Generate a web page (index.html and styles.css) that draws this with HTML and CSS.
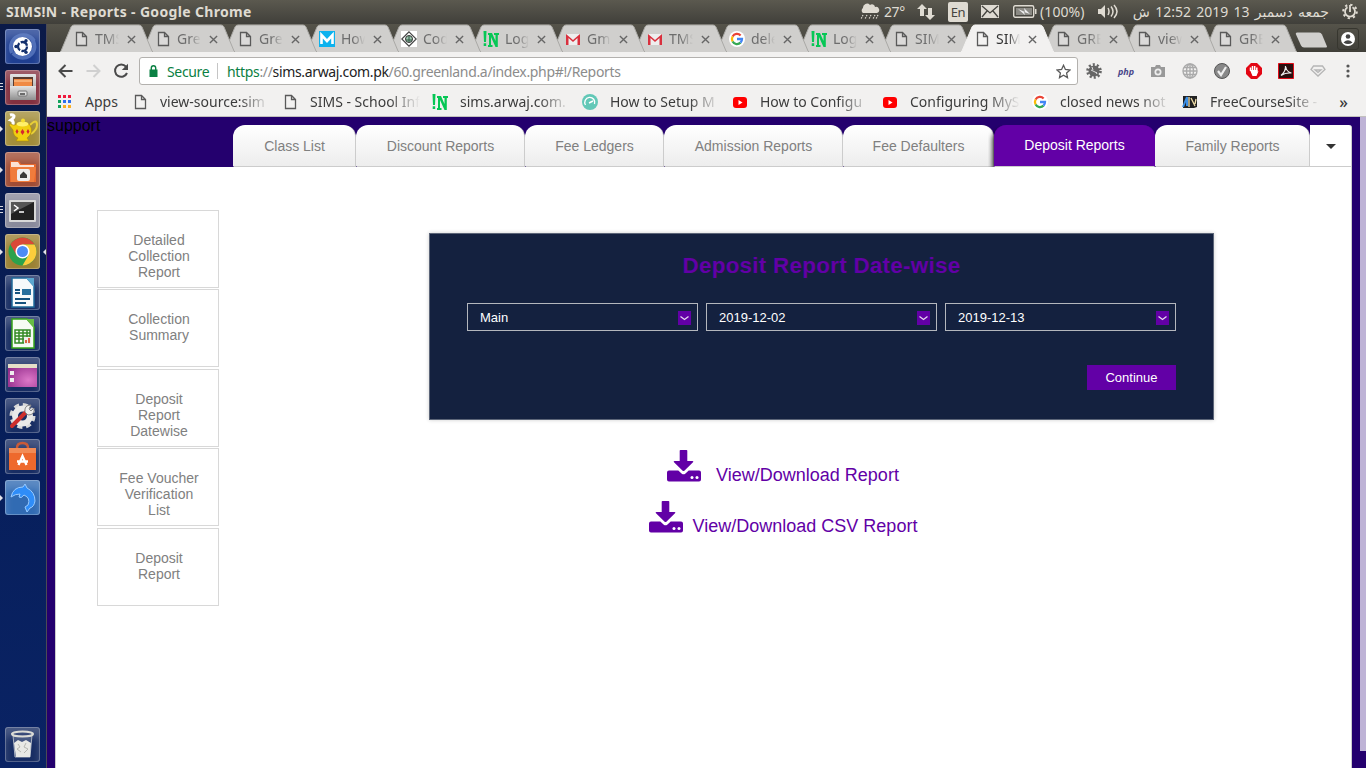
FILE: index.html
```
<!DOCTYPE html>
<html lang="en">
<head>
<meta charset="utf-8">
<title>SIMS!N - Reports</title>
<link rel="stylesheet" href="styles.css">
</head>
<body>
<svg class="defs" width="0" height="0">
  <defs>
    <linearGradient id="steel" x1="0" y1="0" x2="0" y2="1"><stop offset="0" stop-color="#e4e4e4"/><stop offset="1" stop-color="#8f8f8f"/></linearGradient>
    <radialGradient id="plum" cx=".7" cy=".7" r=".9"><stop offset="0" stop-color="#dc78c8"/><stop offset="1" stop-color="#8b2484"/></radialGradient>
    <symbol id="tab" viewBox="0 0 96 28"><path d="M0 28L1 27L11 3Q12 1 14 1H79Q81 1 82 3L92 27L93 28"/></symbol>
    <symbol id="page" viewBox="0 0 16 16"><path d="M3.500 1.500h6l4 4v9h-10zM9.500 1.500v4h4" fill="#f4f4f4" fill-opacity=".3" stroke="#5a5a5a" stroke-width="1.300"/></symbol>
    <symbol id="close" viewBox="0 0 10 10"><path d="M1 1l8 8M9 1L1 9" stroke="#666" stroke-width="1.500"/></symbol>
    <symbol id="sin" viewBox="0 0 16 16"><path d="M.5 0h3L3 11H1zM.7 12.300h2.500V15H.7zM5 2h4l3.500 8V4H11V2h5v2h-1.200v12h-2.300L8 6v8h1.500v2H5v-2h1V4H5z" fill="#06c755"/></symbol>
    <symbol id="gmail" viewBox="0 0 16 16"><path d="M1 3h14v11H1z" fill="#eee"/><path d="M1 14V3l7 6 7-6v11h-2.500V7L8 11 3.500 7v7z" fill="#d9303e"/></symbol>
    <symbol id="google" viewBox="0 0 16 16"><circle cx="8" cy="8" r="8" fill="#fff"/><g fill="none" stroke-width="2.300"><path d="M3.600 5.500A5 5 0 0 1 11.600 4.500" stroke="#ea4335"/><path d="M3.600 10.500A5 5 0 0 1 3.600 5.500" stroke="#fbbc05"/><path d="M11.500 11.600A5 5 0 0 1 3.600 10.500" stroke="#34a853"/><path d="M8 8h5A5 5 0 0 1 11.500 11.600" stroke="#4285f4"/></g></symbol>
    <symbol id="youtube" viewBox="0 0 16 16"><rect x="1" y="3" width="14" height="11" rx="3" fill="#f00"/><path d="M6.500 6l4 2.500-4 2.500z" fill="#fff"/></symbol>
    <symbol id="download" viewBox="0 0 34 32"><path d="M13.500 0h6q.8 0 .8.800V11h5.200q1.500.2.500 1.300l-8.400 8.300q-1.100 1-2.200 0L7 12.300Q6 11.200 7.500 11h5.200V.8q0-.8.800-.8z"/><path d="M2 20.500h9.300l3.500 3.200q1.700 1.200 3.400 0l3.500-3.200H32q2 0 2 2v7q0 2-2 2H2q-2 0-2-2v-7q0-2 2-2z"/><circle cx="25" cy="27.500" r="1.500" fill="#fff"/><circle cx="30" cy="27.500" r="1.500" fill="#fff"/></symbol>
    <symbol id="chev" viewBox="0 0 13 14"><path d="M2.500 5.500L6.500 8.500 10.500 5.500" fill="none" stroke="#e6d6f0" stroke-width="1.300"/></symbol>
  </defs>
</svg>

<header class="panelbar">
  <b class="wtitle">SIMS!N - Reports - Google Chrome</b>
  <div class="indicators">
    <svg class="weather" width="20" height="18" viewBox="0 0 20 18"><path d="M3 10a3 3 0 0 1 0-5A4 4 0 0 1 10 2a3 3 0 0 1 5 2 3 3 0 0 1 2 6z" fill="#dfdbd2"/><path d="M3 12l-2 4M7 12l-2 4M11 12l-2 4M15 12l-2 4M18 12l-2 4" stroke="#dfdbd2" stroke-width="1.200" stroke-dasharray="1.500 1"/></svg>
    <span class="temp">27°</span>
    <svg class="net" width="18" height="16" viewBox="0 0 18 16" fill="#dfdbd2"><path d="M5 0l5 5H7v7H3V5H0zM11 4h4v7h3l-5 5-5-5h3z"/></svg>
    <span class="lang">En</span>
    <svg class="mail" width="18" height="13" viewBox="0 0 18 13"><rect width="18" height="13" fill="#dfdbd2"/><path d="M1 1l8 7 8-7M1 12l5-6M17 12l-5-6" fill="none" stroke="#45443f" stroke-width="1.300"/></svg>
    <svg class="batt" width="24" height="13" viewBox="0 0 24 13"><rect x=".7" y=".7" width="20" height="11.600" rx="1.500" fill="none" stroke="#dfdbd2" stroke-width="1.400"/><path d="M3 3h16v7H3z" fill="#8b8a84"/><path d="M22 4h1.500v5H22z" fill="#dfdbd2"/><path d="M5 4l7 3-1-4 6 6-6-2 1 3z" fill="#eee"/></svg>
    <span class="pct">(100%)</span>
    <svg class="vol" width="21" height="15" viewBox="0 0 21 15" fill="none" stroke="#dfdbd2" stroke-width="1.500"><path d="M0 5h3l4-4v13l-4-4H0z" fill="#dfdbd2" stroke="none"/><path d="M10 4q2 3.500 0 7M13 2.500q4 5 0 10M16 1q6 6.500 0 13"/></svg>
    <span class="date" dir="rtl" lang="ur">جمعه دسمبر 13 2019 12:52 ش</span>
    <svg class="cog" width="16" height="17" viewBox="0 0 16 17" fill="none" stroke="#dfdbd2"><circle cx="8" cy="8.500" r="6.800" stroke-width="2" stroke-dasharray="2.300 3.040"/><path d="M5.500 4.300a5 5 0 1 0 5 0M8 2v7" stroke-width="1.800"/></svg>
  </div>
</header>

<div class="desktop">
  <nav class="launcher">
    <svg class="app c-dash" viewBox="0 0 35 35"><path d="M7 24C1 8 21 0 29 12M27 10c9 15-10 25-19 14" fill="none" stroke="#6f8dd0" stroke-width="4" opacity=".6"/><circle cx="17.500" cy="17.500" r="9.500" fill="#fff"/><circle cx="17.500" cy="17.500" r="4.500" fill="none" stroke="#14306d" stroke-width="2.300" stroke-dasharray="8 1.400"/><g fill="#14306d"><circle cx="11" cy="17.500" r="1.700"/><circle cx="21" cy="11.800" r="1.700"/><circle cx="21" cy="23.200" r="1.700"/></g></svg>
    <div class="slot run3"><svg class="app c-files" viewBox="0 0 35 35"><rect x="5" y="4" width="26" height="26" rx="1" fill="url(#steel)"/><path d="M8 7h20v9H8z" fill="#5b3b2e"/><path d="M9 9h18v7H9z" fill="#f08a45"/><path d="M9 11h18" stroke="#ffd0a0"/><rect x="5" y="16" width="26" height="14" fill="url(#steel)"/><rect x="13" y="21" width="9" height="5" rx="1" fill="#ddd" stroke="#777"/><path d="M15 24h5" stroke="#444" stroke-width="1.500"/></svg></div>
    <div class="slot run1"><svg class="app c-tea" viewBox="0 0 35 35"><path d="M5 4q3-1 4 1 0 2-3 4 3 1 2 5" fill="none" stroke="#fff" stroke-width="3"/><path d="M25 14q7-7 7 0 0 5-6 9" fill="none" stroke="#e8cf37" stroke-width="2"/><path d="M10 14Q17 8 25 14q4 8-3 13l2 3H11l2-3q-5-2-5-8L4 14q1-2 4 0z" fill="#f1cf10" stroke="#ad8a08" stroke-width=".6"/><ellipse cx="17.500" cy="13" rx="6" ry="2.500" fill="#fff06a"/><circle cx="18" cy="9.500" r="2" fill="#f6dc2c"/><path d="M12 18l1.500 2.500L12 23l-1.500-2.500zM17.500 18l2 3-2 3-2-3zM23 18l1.500 2.500L23 23l-1.500-2.500z" fill="#d7262f"/></svg></div>
    <div class="slot run1"><svg class="app c-home" viewBox="0 0 35 35"><path d="M5 9h9l2 3h15v18H5z" fill="#e8682d"/><path d="M6 10h7l2 3h14v2H6z" fill="#fff" opacity=".8"/><path d="M5 15h26l-2 15H6z" fill="#f07c3c"/><rect x="12" y="17" width="13" height="12" rx="2" fill="#eee"/><path d="M15 23l3.500-3.500L22 23v3h-7z" fill="#3a3a3a"/></svg></div>
    <div class="slot run3"><svg class="app c-term" viewBox="0 0 35 35"><rect x="4" y="7" width="27" height="22" rx="1" fill="#d8d8d8"/><rect x="6" y="9" width="23" height="18" fill="#222"/><path d="M6 9h23L6 21z" fill="#555"/><path d="M9 12l4 3-4 3M14 19h5" fill="none" stroke="#fff" stroke-width="1.500"/></svg></div>
    <div class="slot run1 focused"><svg class="app c-chrome" viewBox="0 0 35 35"><circle cx="17.500" cy="17.500" r="14" fill="#2ba24c"/><path d="M5.400 10.500A14 14 0 0 1 29.600 10.500H17.500L11.500 21z" fill="#da4937"/><path d="M29.600 10.500A14 14 0 0 1 17.500 31.500L23.600 21 17.500 10.500z" fill="#fccd3c"/><circle cx="17.500" cy="17.500" r="7" fill="#fff"/><circle cx="17.500" cy="17.500" r="5.500" fill="#4c8bf5"/></svg></div>
    <svg class="app c-dark" viewBox="0 0 35 35"><path d="M7 3h15l7 8v21H7z" fill="#f6f9fb" stroke="#1e6a9b" stroke-width="1.500"/><path d="M21 3h8v9z" fill="#5ba7cf"/><path d="M10 15h5M10 18h5M10 24h15M10 28h11" stroke="#14527e" stroke-width="1.800"/><rect x="17" y="14" width="9" height="6" fill="#276f9d"/></svg>
    <svg class="app c-dark" viewBox="0 0 35 35"><path d="M7 3h15l7 8v21H7z" fill="#f6fbf4" stroke="#36a519" stroke-width="1.500"/><path d="M21 3h8v9z" fill="#67bd45"/><path d="M10 14h15v13H10zM10 17h15M10 20h15M10 23h15M14 14v13M18 14v13M22 14v13" fill="none" stroke="#338b25" stroke-width="1.500"/><path d="M19 21h7v7h-7z" fill="#eee"/><path d="M21 27v-3M24 27v-5" stroke="#dc6543" stroke-width="2"/></svg>
    <svg class="app c-dark" viewBox="0 0 35 35"><rect x="3" y="7" width="29" height="23" fill="url(#plum)"/><path d="M3 7h29v4H3z" fill="#e5dfc8"/><path d="M5 14h4v4H5zM5 21h4v4H5z" fill="#eee"/></svg>
    <svg class="app c-dark" viewBox="0 0 35 35"><circle cx="17.500" cy="18" r="11" fill="none" stroke="#d8d8d8" stroke-width="4" stroke-dasharray="5 3.640"/><circle cx="17.500" cy="18" r="7.500" fill="none" stroke="#e9e9e9" stroke-width="6"/><path d="M7 28L21 14" stroke="#cd2e2b" stroke-width="4" stroke-linecap="round"/><path d="M20 14q-1-7 6-7l-2 4 2 2 3-3q1 7-6 7z" fill="#eee" stroke="#888"/></svg>
    <svg class="app c-dark" viewBox="0 0 35 35"><path d="M12 9q0-5 5.500-5T23 9" fill="none" stroke="#c85a38" stroke-width="2.500"/><path d="M4 9h27v22H4z" fill="#ee692d"/><path d="M4 9h27v5H4z" fill="#f28b55"/><path d="M13.500 26l4-9 4 9M12 22.500h11" fill="none" stroke="#fff" stroke-width="2.300"/></svg>
    <div class="slot run1"><svg class="app c-dolphin" viewBox="0 0 35 35"><path d="M6 17q2-10 12-10l2-3 2 4q8 4 8 13-1 6-5 7l-3 4-2-5 3-2q3-7-4-10-3 4-5 2l1-3q-5 0-9 3z" fill="#2f8df8" stroke="#9acbff" stroke-width="1"/></svg></div>
    <svg class="app c-dark trash" viewBox="0 0 35 35"><path d="M8 8l2 22h15l2-22" fill="#b9c0cc" fill-opacity=".25" stroke="#aab2c0"/><path d="M9 16l4-3 4 2 4-2 5 3-1 14H11z" fill="#e9e9e5"/><path d="M13 17l2 3-3 2 4 3M21 16l-2 4 4 2-4 4" fill="none" stroke="#b7b7b1"/><ellipse cx="17.500" cy="7" rx="10.500" ry="2.500" fill="none" stroke="#dcdcd6" stroke-width="2.200"/></svg>
  </nav>

  <div class="browser">
    <div class="tabstrip">
      <div class="tab"><svg class="shape"><use href="#tab"/></svg><svg class="fav"><use href="#page"/></svg><span>TMS</span><svg class="x"><use href="#close"/></svg></div>
      <div class="tab"><svg class="shape"><use href="#tab"/></svg><svg class="fav"><use href="#page"/></svg><span>Gre</span><svg class="x"><use href="#close"/></svg></div>
      <div class="tab"><svg class="shape"><use href="#tab"/></svg><svg class="fav"><use href="#page"/></svg><span>Gre</span><svg class="x"><use href="#close"/></svg></div>
      <div class="tab"><svg class="shape"><use href="#tab"/></svg><svg class="fav" viewBox="0 0 16 16"><path d="M0 0h16v16H0z" fill="#0db2ee"/><path d="M2.500 13V4l5.500 6 5.500-6v9" fill="none" stroke="#fff" stroke-width="2.600"/></svg><span>How</span><svg class="x"><use href="#close"/></svg></div>
      <div class="tab"><svg class="shape"><use href="#tab"/></svg><svg class="fav" viewBox="0 0 16 16"><path d="M0 0h16v16H0z" fill="#fff"/><path d="M8 .8L15.200 8 8 15.200.8 8z" fill="none" stroke="#444" stroke-width="1.200"/><circle cx="8" cy="8" r="3.500" fill="#9ac5ac" stroke="#333"/><path d="M5 9h6M8 5v6" stroke="#354"/></svg><span>Cod</span><svg class="x"><use href="#close"/></svg></div>
      <div class="tab"><svg class="shape"><use href="#tab"/></svg><svg class="fav"><use href="#sin"/></svg><span>Log</span><svg class="x"><use href="#close"/></svg></div>
      <div class="tab"><svg class="shape"><use href="#tab"/></svg><svg class="fav"><use href="#gmail"/></svg><span>Gm</span><svg class="x"><use href="#close"/></svg></div>
      <div class="tab"><svg class="shape"><use href="#tab"/></svg><svg class="fav"><use href="#gmail"/></svg><span>TMS</span><svg class="x"><use href="#close"/></svg></div>
      <div class="tab"><svg class="shape"><use href="#tab"/></svg><svg class="fav"><use href="#google"/></svg><span>dele</span><svg class="x"><use href="#close"/></svg></div>
      <div class="tab"><svg class="shape"><use href="#tab"/></svg><svg class="fav"><use href="#sin"/></svg><span>Log</span><svg class="x"><use href="#close"/></svg></div>
      <div class="tab"><svg class="shape"><use href="#tab"/></svg><svg class="fav"><use href="#page"/></svg><span>SIM</span><svg class="x"><use href="#close"/></svg></div>
      <div class="tab active"><svg class="shape"><use href="#tab"/></svg><svg class="fav"><use href="#page"/></svg><span>SIM</span><svg class="x"><use href="#close"/></svg></div>
      <div class="tab"><svg class="shape"><use href="#tab"/></svg><svg class="fav"><use href="#page"/></svg><span>GRE</span><svg class="x"><use href="#close"/></svg></div>
      <div class="tab"><svg class="shape"><use href="#tab"/></svg><svg class="fav"><use href="#page"/></svg><span>view</span><svg class="x"><use href="#close"/></svg></div>
      <div class="tab"><svg class="shape"><use href="#tab"/></svg><svg class="fav"><use href="#page"/></svg><span>GRE</span><svg class="x"><use href="#close"/></svg></div>
      <svg class="newtab" width="33" height="16" viewBox="0 0 33 16"><path d="M2 .5h22q2 0 3 2l5 12q0 1-1 1H9q-2 0-3-2L.8 2Q.5.5 2 .5z" fill="#d0cfcd"/></svg>
      <div class="user"><svg width="14" height="14" viewBox="0 0 14 14"><circle cx="7" cy="7" r="7" fill="#fff"/><circle cx="7" cy="4.500" r="2.300" fill="#444"/><path d="M2.500 10.500Q7 6 11.500 10.500q-4.500 3-9 0z" fill="#444"/></svg></div>
    </div>

    <div class="toolbar">
      <svg width="15" height="14" viewBox="0 0 15 14" class="back"><path d="M14.500 7H2M7.500 1L1.500 7l6 6" fill="none" stroke="#4a4a4a" stroke-width="2"/></svg>
      <svg width="15" height="14" viewBox="0 0 15 14" class="fwd"><path d="M.5 7H13M7.500 1l6 6-6 6" fill="none" stroke="#d0d0d0" stroke-width="2"/></svg>
      <svg width="16" height="16" viewBox="0 0 16 16" class="reload"><path d="M13 3.600A6.200 6.200 0 1 0 14 10" fill="none" stroke="#4a4a4a" stroke-width="2"/><path d="M15 .8V7H8.800z" fill="#4a4a4a"/></svg>
      <div class="omnibox">
        <svg width="9" height="12" viewBox="0 0 9 12"><path d="M.5 4.500h8V12h-8z" fill="#0b8043"/><path d="M2.300 5V3a2.200 2.200 0 0 1 4.400 0v2" fill="none" stroke="#0b8043" stroke-width="1.400"/></svg>
        <span class="secure">Secure</span><i class="sep"></i>
        <span class="url"><em>https</em>://<strong>sims.arwaj.com.pk</strong>/60.greenland.a/index.php#!/Reports</span>
        <svg class="star" width="15" height="15" viewBox="0 0 15 15"><path d="M7.500 1.300l1.900 4.200 4.600.5-3.400 3.100.9 4.500-4-2.300-4 2.300.9-4.500L1 6l4.600-.5z" fill="none" stroke="#5a5a5a" stroke-width="1.300"/></svg>
      </div>
      <div class="exts">
        <svg viewBox="0 0 16 16"><circle cx="8" cy="8" r="5.500" fill="#666"/><circle cx="8" cy="8" r="6.300" fill="none" stroke="#666" stroke-width="3" stroke-dasharray="2 1.960"/><path d="M5 7l6 3M6 4l1 3M10 9l1 2" stroke="#ddd"/></svg>
        <b class="php">php</b>
        <svg viewBox="0 0 16 16"><path d="M1 4h4l1-2h4l1 2h4v10H1z" fill="#999"/><circle cx="8" cy="9" r="3.500" fill="#eee"/><circle cx="8" cy="9" r="1.800" fill="#999"/></svg>
        <svg viewBox="0 0 16 16" fill="none" stroke="#aaa" stroke-width="1.400"><circle cx="8" cy="8" r="7"/><ellipse cx="8" cy="8" rx="3.500" ry="7"/><path d="M8 1v14M1 8h14M2 4.500h12M2 11.500h12"/></svg>
        <svg viewBox="0 0 16 16"><circle cx="8" cy="8" r="7.500" fill="#888" stroke="#555"/><path d="M4 8l3 4 5-8" fill="none" stroke="#eee" stroke-width="2.200"/></svg>
        <svg viewBox="0 0 16 16"><path d="M5 0h6l5 5v6l-5 5H5l-5-5V5z" fill="#e30613"/><path d="M4.500 8V4.500M6.500 8V3M8.700 8V3M10.800 8V4.500" stroke="#fff" stroke-width="1.500"/><path d="M4 7h7.500v1.500l1-.5-2 5h-4z" fill="#fff"/></svg>
        <svg viewBox="0 0 16 16"><path d="M.5.500h15v15H.5z" fill="#2a1010" stroke="#e10b17"/><path d="M3 12.500Q8 8 7.500 3q1 6 6 7-6-.5-10.500 2.500z" fill="none" stroke="#eee" stroke-width="1.200"/></svg>
        <svg viewBox="0 0 16 16"><path d="M3.500 3h9L15 6.500 8 13 1 6.500zM5 7h6l-3 2.500z" fill="none" stroke="#b5b5b5" stroke-width="1.300"/></svg>
        <svg class="dots" viewBox="0 0 4 14" fill="#555"><circle cx="2" cy="2" r="1.600"/><circle cx="2" cy="7" r="1.600"/><circle cx="2" cy="12" r="1.600"/></svg>
      </div>
    </div>

    <div class="bookmarks">
      <a class="apps"><svg width="13" height="13" viewBox="0 0 13 13"><path d="M0 0h3v3H0zM5 0h3v3H5zM10 0h3v3h-3z" fill="#ef1a3c"/><path d="M0 5h3v3H0zM0 10h3v3H0z" fill="#12a25c"/><path d="M5 5h3v3H5zM10 5h3v3h-3z" fill="#2f6fee"/><path d="M5 10h3v3H5zM10 10h3v3h-3z" fill="#f9ae24"/></svg><span>Apps</span></a>
      <a><svg><use href="#page"/></svg><span>view-source:sim</span></a>
      <a><svg><use href="#page"/></svg><span>SIMS - School Inf</span></a>
      <a><svg><use href="#sin"/></svg><span>sims.arwaj.com.</span></a>
      <a><svg viewBox="0 0 16 16"><circle cx="8" cy="8" r="8" fill="#62c8b7"/><path d="M3.500 11A5 5 0 1 1 12.500 10M7 9l4-2" fill="none" stroke="#fff" stroke-width="1.400"/></svg><span>How to Setup M</span></a>
      <a><svg><use href="#youtube"/></svg><span>How to Configu</span></a>
      <a><svg><use href="#youtube"/></svg><span>Configuring MyS</span></a>
      <a><svg><use href="#google"/></svg><span>closed news not</span></a>
      <a><svg viewBox="0 0 16 16"><path d="M1 2h14v11l-3 1H1z" fill="#222"/><path d="M1 13L5 3v9" fill="none" stroke="#3b8ee5" stroke-width="2"/><path d="M7 3v10M9 4l4 8M14 5l-1 5" stroke="#f1dfa9" stroke-width="1.300"/></svg><span>FreeCourseSite -</span></a>
      <b class="more">»</b>
    </div>

    <main class="page">
      <div class="support">support</div>
      <div class="reporttabs">
        <a class="w123">Class List</a><a class="w169">Discount Reports</a><a class="w139">Fee Ledgers</a><a class="w179">Admission Reports</a><a class="w151">Fee Defaulters</a><a class="w162 on">Deposit Reports</a><a class="w155">Family Reports</a><a class="drop"><i></i></a>
      </div>
      <section class="sheet">
        <aside class="side">
          <a>Detailed Collection Report</a><a>Collection Summary</a><a>Deposit Report Datewise</a><a>Fee Voucher Verification List</a><a>Deposit Report</a>
        </aside>
        <div class="content">
          <div class="card">
            <h1>Deposit Report Date-wise</h1>
            <div class="fields">
              <div>Main<svg><use href="#chev"/></svg></div>
              <div>2019-12-02<svg><use href="#chev"/></svg></div>
              <div>2019-12-13<svg><use href="#chev"/></svg></div>
            </div>
            <button>Continue</button>
          </div>
          <div class="links">
            <a><svg><use href="#download"/></svg><span class="far">View/Download Report</span></a>
            <a><svg><use href="#download"/></svg><span>View/Download CSV Report</span></a>
          </div>
        </div>
      </section>
      <div class="scroll"></div>
    </main>
  </div>
</div>
</body>
</html>
```
FILE: styles.css
```
* { box-sizing: border-box; }
body { margin: 0; width: 1366px; height: 768px; overflow: hidden; font-family: "Liberation Sans", Arial, sans-serif; background: #fff; }
svg { display: block; flex: none; }
.defs { position: absolute; }

.panelbar { height: 24px; display: flex; justify-content: space-between; align-items: center; padding: 0 8px 1px 6px; background: linear-gradient(#5b594f, #403f3a); color: #dfdbd2; font: 14px "Noto Sans", "DejaVu Sans", sans-serif; white-space: nowrap; }
.wtitle { font-size: 14px; letter-spacing: .34px; }
.indicators { display: flex; align-items: center; }
.temp { width: 22px; margin: 0 11px 0 4px; letter-spacing: -.4px; }
.lang { width: 20px; height: 20px; margin: 0 13px; border-radius: 2px; background: #dfdbd2; color: #45443f; font-size: 13px; line-height: 20px; text-align: center; letter-spacing: -.5px; }
.batt { margin-left: 14px; }
.pct { width: 46px; margin: 0 12px 0 3px; letter-spacing: .1px; }
.date { width: 198px; margin: 0 13px 0 12px; letter-spacing: 0; word-spacing: 1.6px; }

.desktop { display: flex; height: 744px; }
.launcher { width: 47px; padding: 5px 0 6px 5px; display: flex; flex-direction: column; gap: 6px; background: linear-gradient(#0b1a48, #071f5c 60%, #0a2364); border-right: 1px solid #4c4a55; }
.app { display: block; width: 35px; height: 35px; border-radius: 3px; box-shadow: inset 0 0 0 1px rgba(255,255,255,.25), inset 0 9px 9px rgba(255,255,255,.22); }
.slot { position: relative; width: 35px; height: 35px; }
.run1::before { content: ""; position: absolute; left: -5px; top: 15px; border: 3px solid transparent; border-left-color: #e4e4ea; border-right: 0; }
.run3::before { content: ""; position: absolute; left: -5px; top: 13px; width: 3px; height: 9px; background: repeating-linear-gradient(#d8d8e0 0 1px, transparent 1px 3px); }
.focused::after { content: ""; position: absolute; right: -6px; top: 15px; border: 3px solid transparent; border-right-color: #e4e4ea; border-left: 0; }
.c-dash { background: #1f3f92; }
.c-files { background: #84303f; }
.c-tea { background: #a28d3a; }
.c-home { background: #a04c34; }
.c-term { background: #898a9b; }
.c-chrome { background: #9b8133; }
.c-dark { background: #182d63; }
.c-dolphin { background: #316bb3; }
.trash { margin-top: auto; }

.browser { width: 1319px; display: flex; flex-direction: column; }
.tabstrip { height: 28px; padding: 0 0 0 13px; display: flex; align-items: center; background: linear-gradient(#55534a, #403f39); isolation: isolate; }
.tab { position: relative; width: 82px; height: 28px; flex: none; display: flex; align-items: center; padding: 2px 0 0 13px; }
.tab:nth-child(n+11) { width: 81px; }
.tab:nth-child(1) { z-index: 20; } .tab:nth-child(2) { z-index: 19; } .tab:nth-child(3) { z-index: 18; } .tab:nth-child(4) { z-index: 17; } .tab:nth-child(5) { z-index: 16; } .tab:nth-child(6) { z-index: 15; } .tab:nth-child(7) { z-index: 14; } .tab:nth-child(8) { z-index: 13; } .tab:nth-child(9) { z-index: 12; } .tab:nth-child(10) { z-index: 11; } .tab:nth-child(11) { z-index: 10; } .tab:nth-child(13) { z-index: 8; } .tab:nth-child(14) { z-index: 7; } .tab:nth-child(15) { z-index: 6; }
.tab.active { z-index: 30; }
.shape { position: absolute; left: 0; top: 0; width: 96px; height: 28px; fill: #d0cfcd; stroke: #aaa9a6; stroke-width: 1; }
.active .shape { fill: #f2f1f0; stroke: #f2f1f0; }
.fav { position: relative; width: 16px; height: 16px; }
.tab span { position: relative; width: 24px; margin: 0 8px 0 6px; overflow: hidden; white-space: nowrap; color: #6d6d6d; font: 14px/20px "Noto Sans", sans-serif; -webkit-mask-image: linear-gradient(90deg, #000 50%, transparent); mask-image: linear-gradient(90deg, #000 50%, transparent); }
.active span { color: #333; }
.x { position: relative; width: 9px; height: 9px; }
.newtab { margin: 3px 0 0 10px; }
.user { width: 22px; height: 22px; margin: 1px 0 0 9px; border: 1px solid #37362f; border-radius: 3px; display: grid; place-items: center; }

.toolbar { height: 38px; display: flex; align-items: center; padding-left: 11px; background: #f2f1f0; }
.fwd { margin-left: 13px; }
.reload { margin-left: 12px; }
.omnibox { width: 939px; height: 28px; margin-left: 10px; padding: 0 6px 0 9px; display: flex; align-items: center; border: 1px solid #b3b1ae; border-radius: 3px; background: #fff; font: 14px "Noto Sans", sans-serif; white-space: nowrap; }
.secure { width: 44px; margin-left: 9px; color: #0b8043; letter-spacing: -.35px; }
.sep { width: 1px; height: 16px; margin: 0 9px 0 6px; background: #c5c5c5; }
.url { color: #8c8c8c; letter-spacing: -.34px; }
.url em { color: #0b8043; font-style: normal; }
.url strong { color: #222; font-weight: 400; }
.star { margin-left: auto; }
.exts { display: flex; align-items: center; gap: 16px; margin-left: 8px; }
.exts svg { width: 16px; height: 16px; }
.exts .dots { width: 4px; height: 14px; margin-left: 4px; }
.php { width: 16px; color: #49478a; font: italic bold 9px "Noto Sans", sans-serif; }

.bookmarks { position: relative; height: 27px; padding: 0 0 3px 11px; display: flex; align-items: center; background: #f2f1f0; border-bottom: 1px solid #c3c1be; color: #3c3c3c; font: 14px "Noto Sans", sans-serif; white-space: nowrap; }
.bookmarks a { width: 150px; flex: none; display: flex; align-items: center; }
.bookmarks a svg { width: 16px; height: 16px; margin-right: 12px; }
.bookmarks a span { width: 110px; overflow: hidden; -webkit-mask-image: linear-gradient(90deg, #000 72%, transparent); mask-image: linear-gradient(90deg, #000 72%, transparent); }
.bookmarks a.apps { width: 74px; }
.bookmarks a.apps svg { width: 13px; height: 13px; margin-right: 14px; }
.bookmarks a.apps span { width: auto; -webkit-mask: none; mask: none; }
.more { position: absolute; right: 18px; top: 1px; font-weight: 500; font-size: 16px; }

.page { position: relative; height: 651px; padding: 8px 14px 0 8px; background: #24006e; }
.support { position: absolute; left: 0; top: 0; font-size: 16px; line-height: 18px; color: #000; }
.reporttabs { height: 42px; margin-left: 178px; display: flex; }
.reporttabs a { height: 42px; padding-top: 1px; line-height: 41px; text-align: center; font-size: 14px; color: #808080; background: linear-gradient(#fff, #ededed); border: solid #ccc; border-width: 0 1px 1px; border-left-color: transparent; border-radius: 12px 12px 0 0; background-clip: border-box; }
.reporttabs .w123 { width: 123px; } .w169 { width: 169px; } .w139 { width: 139px; } .w179 { width: 179px; } .w151 { width: 151px; } .w162 { width: 162px; } .w155 { width: 155px; }
.reporttabs .on { position: relative; width: 161px; padding-top: 0; background: #6200a6; color: #fff; border-color: #6200a6; border-bottom-color: #ccc; box-shadow: -3px 3px 4px -1px rgba(0,0,0,.7); clip-path: inset(0 0 0 -6px); }
.reporttabs .drop { width: 42px; display: grid; place-items: center; background: #fff; border-left: 0; border-radius: 0 3px 0 0; padding: 1px 0 0; }
.drop i { border: 5px solid transparent; border-top-color: #333; border-bottom: 0; }
.sheet { width: 1297px; height: 601px; display: flex; background: #fff; border-left: 1px solid #ccc; border-right: 1px solid #ccc; padding: 43px 0 0 41px; }
.side { width: 122px; display: flex; flex-direction: column; gap: 1.4px; }
.side a { height: 78px; padding: 21px 19px 0 21px; border: 1px solid #d8d8d8; color: #808080; font-size: 14px; line-height: 16px; text-align: center; }
.content { width: 785px; margin: 23px 0 0 210px; }
.card { height: 187px; padding: 18px 37px 0; display: flex; flex-direction: column; background: #14213f; border: 1px solid #5c6578; box-shadow: 0 0 4px rgba(0,0,0,.2); }
.card h1 { margin: 0; font-size: 22.4px; letter-spacing: .28px; line-height: 28px; text-align: center; color: #6200a6; }
.fields { display: flex; justify-content: space-between; margin-top: 23px; }
.fields div { width: 231px; height: 28px; padding: 1px 6px 0 12px; display: flex; align-items: center; justify-content: space-between; border: 1px solid #b4b7bd; color: #fff; font-size: 13px; }
.fields svg { width: 13px; height: 14px; background: #6200a6; }
.card button { width: 89px; height: 25px; margin: 34px 0 0; padding: 0; align-self: flex-end; border: 0; background: #6200a6; color: #fff; font: 13px "Liberation Sans", sans-serif; }
.links { width: 708px; padding-top: 30px; display: flex; flex-direction: column; align-items: center; }
.links a { height: 51px; display: flex; align-items: flex-start; color: #6200a6; font-size: 18px; line-height: 20px; }
.links svg { width: 34px; height: 32px; fill: #6200a6; }
.links span { margin: 15px 0 0 10px; }
.links .far { margin-left: 15px; }
.scroll { position: absolute; right: 0; top: 0; width: 6px; height: 634px; background: #beb3d6; }
```
